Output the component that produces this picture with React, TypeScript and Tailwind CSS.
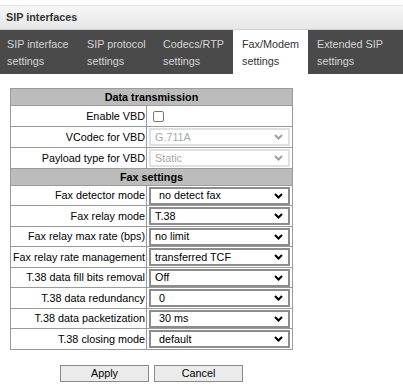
import React from "react";

type Row =
  | { kind: "head"; title: string }
  | { kind: "check"; label: string; h: string }
  | { kind: "select"; label: string; value: string; h: string; disabled?: boolean; indent?: boolean; last?: boolean };

const tabs = [
  { title: ["SIP interface", "settings"], cls: "w-[77px] pl-[7px]" },
  { title: ["SIP protocol", "settings"], cls: "w-[77px] pl-[10px]" },
  { title: ["Codecs/RTP", "settings"], cls: "w-[79px] pl-[9px]" },
  { title: ["Fax/Modem", "settings"], cls: "w-[75px] pl-[9px]", active: true },
  { title: ["Extended SIP", "settings"], cls: "flex-1 pl-[9px]" },
];

const rows: Array<Row> = [
  { kind: "head", title: "Data transmission" },
  { kind: "check", label: "Enable VBD", h: "h-[21px]" },
  { kind: "select", label: "VCodec for VBD", value: "G.711A", h: "h-[21px]", disabled: true },
  { kind: "select", label: "Payload type for VBD", value: "Static", h: "h-[21px]", disabled: true },
  { kind: "head", title: "Fax settings" },
  { kind: "select", label: "Fax detector mode", value: "no detect fax", h: "h-[20px]", indent: true },
  { kind: "select", label: "Fax relay mode", value: "T.38", h: "h-[21px]" },
  { kind: "select", label: "Fax relay max rate (bps)", value: "no limit", h: "h-[20px]" },
  { kind: "select", label: "Fax relay rate management", value: "transferred TCF", h: "h-[21px]" },
  { kind: "select", label: "T.38 data fill bits removal", value: "Off", h: "h-[20px]" },
  { kind: "select", label: "T.38 data redundancy", value: "0", h: "h-[21px]", indent: true },
  { kind: "select", label: "T.38 data packetization", value: "30 ms", h: "h-[20px]", indent: true },
  { kind: "select", label: "T.38 closing mode", value: "default", h: "h-[20px]", indent: true, last: true },
];

const Chevron = ({ disabled }: { disabled?: boolean }) => (
  <svg width="9" height="6" viewBox="0 0 9 6" className="absolute right-[5px] top-1/2 -translate-y-1/2">
    <path
      d="M1 1 L4.5 4.5 L8 1"
      fill="none"
      stroke={disabled ? "#a0a0a0" : "#000"}
      strokeWidth="2"
    />
  </svg>
);

const Select = ({ value, disabled, indent }: { value: string; disabled?: boolean; indent?: boolean }) => (
  <div
    className={`relative ml-[2px] flex h-[18px] w-[141px] items-center border-2 ${
      disabled ? "border-[#e0e0e0] text-[#a8a8a8]" : "border-[#8c8c8c] text-black"
    } ${indent ? "pl-[8px]" : "pl-[4px]"}`}
  >
    {value}
    <Chevron disabled={disabled} />
  </div>
);

const App = () => {
  return (
    <div className="h-[392px] w-[403px] bg-white text-[10.8px] font-['Liberation_Sans',Arial,sans-serif]">
      <div className="pt-[5px]">
        <div className="flex h-[25px] items-center border-t border-b border-t-[#e6e6e6] border-b-[#d2d2d2] bg-gradient-to-b from-[#f6f6f6] to-[#e7e7e7] pl-[6px] font-bold text-[#333]">
          SIP interfaces
        </div>
      </div>
      <div className="flex h-[44px] bg-[#4a4a4a]">
        {tabs.map((tab, index) => (
          <div
            key={index}
            className={`${tab.cls} whitespace-nowrap pt-[6px] leading-[17px] ${
              tab.active ? "bg-white text-[#333]" : "text-[#d4d4d4]"
            }`}
          >
            <div>{tab.title[0]}</div>
            <div>{tab.title[1]}</div>
          </div>
        ))}
      </div>

      <div className="ml-[10px] mt-[14px] w-[283px] border border-[#9a9a9a]">
        {rows.map((row, index) => {
          if (row.kind === "head") {
            return (
              <div
                key={index}
                className="flex h-[17px] items-center justify-center border-b border-[#9a9a9a] bg-[#bcbcbc] font-bold"
              >
                {row.title}
              </div>
            );
          }
          const border = row.kind === "select" && row.last ? "h-[20px]" : `${row.h} border-b border-[#9a9a9a]`;
          return (
            <div key={index} className={`flex ${border}`}>
              <div className="flex w-[136px] shrink-0 items-center justify-end whitespace-nowrap border-r border-[#9a9a9a] pr-[1px] text-black">
                {row.label}
              </div>
              <div className="flex flex-1 items-center">
                {row.kind === "check" ? (
                  <div className="ml-[6px] h-[11px] w-[11px] rounded-[2px] border border-[#767676] bg-white" />
                ) : (
                  <Select value={row.value} disabled={row.disabled} indent={row.indent} />
                )}
              </div>
            </div>
          );
        })}
      </div>

      <div className="ml-[60px] mt-[15px] flex gap-[5px]">
        <button className="h-[17px] w-[89px] border border-[#8a8a8a] bg-[#ebebeb] text-black leading-none">
          Apply
        </button>
        <button className="h-[17px] w-[89px] border border-[#8a8a8a] bg-[#ebebeb] text-black leading-none">
          Cancel
        </button>
      </div>
    </div>
  );
};

export default App;
